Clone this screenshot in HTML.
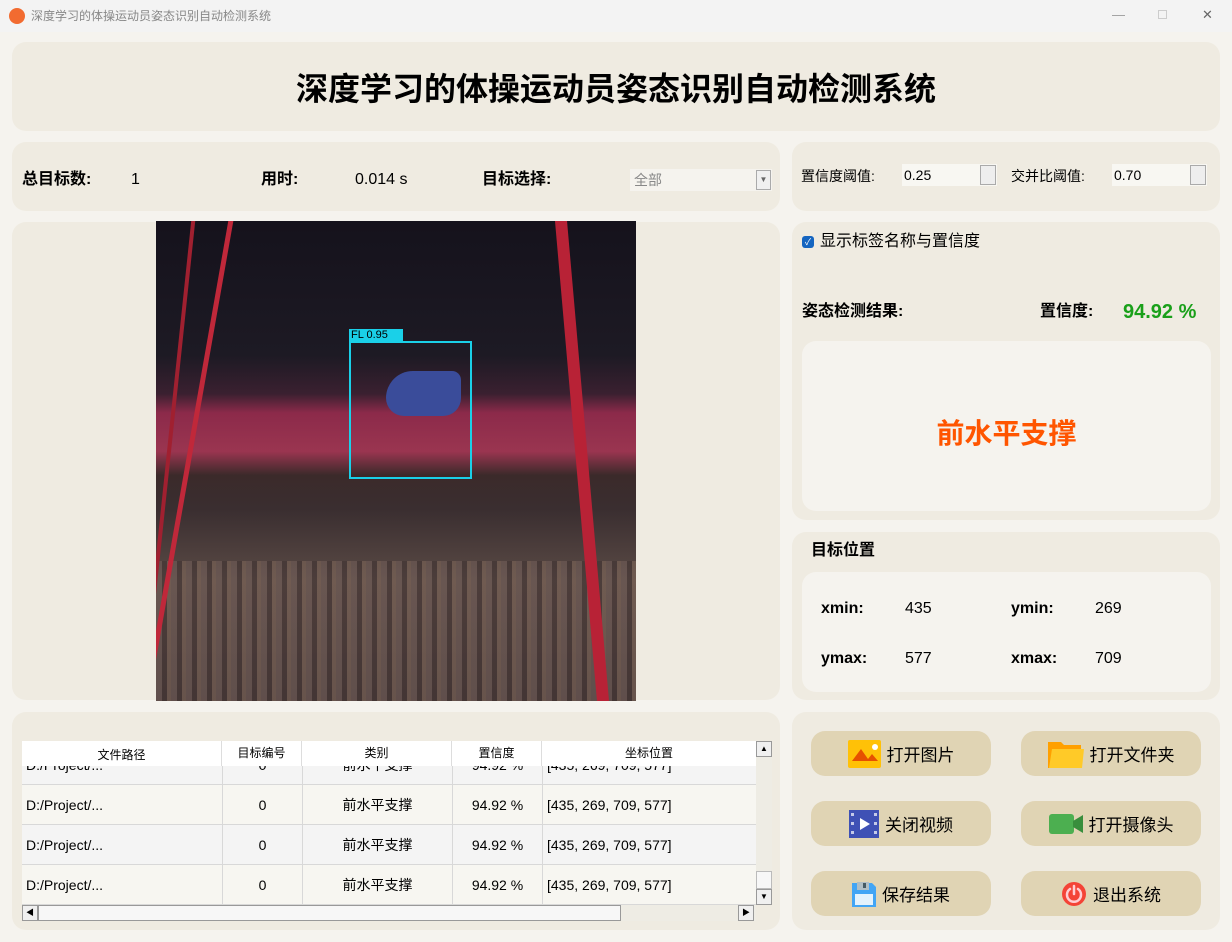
<!DOCTYPE html><html><head><meta charset="utf-8"><style>
*{box-sizing:border-box;margin:0;padding:0}
body{width:1232px;height:942px;background:#f5f3ee;font-family:"Liberation Sans","Noto Sans CJK SC",sans-serif;position:relative;overflow:hidden;color:#000}
.a{position:absolute;line-height:20px}
.p{position:absolute;background:#efebe1;border-radius:14px}
.b{font-weight:bold}
.btn{position:absolute;width:180px;height:45px;background:#e0d4b4;border-radius:14px;font-size:17px;display:flex;align-items:center;justify-content:center;gap:6px}
table{border-collapse:collapse;font-size:14px}
td{border:1px solid #d8d8d8;text-align:center;height:40px}
</style></head><body>
<div class="a" style="left:0;top:0;width:1232px;height:32px;background:#f3f3f3"></div>
<div class="a" style="left:9px;top:8px;width:16px;height:16px;border-radius:50%;background:#f26b30"></div>
<div class="a" style="left:31px;top:6px;font-size:12px;color:#888">深度学习的体操运动员姿态识别自动检测系统</div>
<div class="a" style="left:1112px;top:5px;font-size:13px;color:#999">—</div>
<div class="a" style="left:1158px;top:10px;width:9px;height:9px;border:1px solid #ccc"></div>
<div class="a" style="left:1202px;top:5px;font-size:13px;color:#666">✕</div>

<div class="p" style="left:12px;top:42px;width:1208px;height:89px"></div>
<div class="a b" style="left:0;width:1232px;top:70px;line-height:38px;text-align:center;font-size:32px">深度学习的体操运动员姿态识别自动检测系统</div>

<div class="p" style="left:12px;top:142px;width:768px;height:69px"></div>
<div class="a b" style="left:22px;top:170px;font-size:16px">总目标数:</div>
<div class="a" style="left:131px;top:170px;font-size:16px">1</div>
<div class="a b" style="left:261px;top:170px;font-size:16px">用时:</div>
<div class="a" style="left:355px;top:170px;font-size:16px">0.014 s</div>
<div class="a b" style="left:482px;top:170px;font-size:16px">目标选择:</div>
<div class="a" style="left:630px;top:169px;width:142px;height:22px;background:#f5f3ee;font-size:14px;color:#888;padding:1px 4px">全部</div>
<div class="a" style="left:756px;top:170px;width:15px;height:20px;border:1px solid #aaa;background:#f0f0f0;font-size:8px;color:#666;text-align:center;line-height:18px">▼</div>

<div class="p" style="left:792px;top:142px;width:428px;height:69px"></div>
<div class="a" style="left:801px;top:166px;font-size:14px">置信度阈值:</div>
<div class="a" style="left:902px;top:164px;width:95px;height:22px;background:#f8f7f2;font-size:14px;padding:1px 2px">0.25</div>
<div class="a" style="left:980px;top:165px;width:16px;height:20px;border:1px solid #aaa;background:#eee"></div>
<div class="a" style="left:1011px;top:166px;font-size:14px">交并比阈值:</div>
<div class="a" style="left:1112px;top:164px;width:95px;height:22px;background:#f8f7f2;font-size:14px;padding:1px 2px">0.70</div>
<div class="a" style="left:1190px;top:165px;width:16px;height:20px;border:1px solid #aaa;background:#eee"></div>

<div class="p" style="left:12px;top:222px;width:768px;height:478px"></div>
<div class="a" style="left:156px;top:221px;width:480px;height:480px;overflow:hidden;background:linear-gradient(#15121c 0%,#1d1a24 28%,#3a2030 36%,#8c2a4a 40%,#9a3550 48%,#3b2a2a 53%,#3a2e30 60%,#5a4a45 75%,#4a3c3a 100%)">
<div class="a" style="left:0;top:340px;width:480px;height:140px;background:repeating-linear-gradient(90deg,#7a6560 0 6px,#3c2e2e 6px 11px,#8a7060 11px 15px);opacity:.45"></div>
<div class="a" style="left:30px;top:-20px;width:5px;height:520px;background:#c0283a;transform:rotate(10deg)"></div>
<div class="a" style="left:10px;top:-20px;width:4px;height:520px;background:#a02030;transform:rotate(6deg)"></div>
<div class="a" style="left:420px;top:-20px;width:12px;height:520px;background:#b82236;transform:rotate(-5deg)"></div>
<div class="a" style="left:193px;top:120px;width:123px;height:138px;border:2px solid #1ad0e8"></div>
<div class="a" style="left:193px;top:108px;width:54px;height:13px;background:#1ad0e8;font-size:11px;line-height:13px;padding-left:2px">FL 0.95</div>
<div class="a" style="left:230px;top:150px;width:75px;height:45px;background:#3a4c9a;border-radius:30px 10px 20px 20px"></div>
</div>

<div class="p" style="left:792px;top:222px;width:428px;height:298px"></div>
<div class="a" style="left:802px;top:236px;width:12px;height:12px;background:#1565c0;border-radius:3px;color:#fff;font-size:9px;text-align:center;line-height:12px">✓</div>
<div class="a" style="left:820px;top:232px;font-size:16px">显示标签名称与置信度</div>
<div class="a b" style="left:802px;top:302px;font-size:16px">姿态检测结果:</div>
<div class="a b" style="left:1040px;top:302px;font-size:16px">置信度:</div>
<div class="a b" style="left:1123px;top:302px;font-size:20px;color:#1aa01a">94.92 %</div>
<div class="a" style="left:802px;top:341px;width:409px;height:170px;background:#f5f3ee;border-radius:14px"></div>
<div class="a b" style="left:802px;width:409px;top:418px;line-height:32px;text-align:center;font-size:28px;color:#ff5500">前水平支撑</div>

<div class="p" style="left:792px;top:532px;width:428px;height:168px"></div>
<div class="a b" style="left:811px;top:541px;font-size:16px">目标位置</div>
<div class="a" style="left:802px;top:572px;width:409px;height:120px;background:#f5f3ee;border-radius:14px"></div>
<div class="a b" style="left:821px;top:599px;font-size:16px">xmin:</div><div class="a" style="left:905px;top:599px;font-size:16px">435</div>
<div class="a b" style="left:1011px;top:599px;font-size:16px">ymin:</div><div class="a" style="left:1095px;top:599px;font-size:16px">269</div>
<div class="a b" style="left:821px;top:649px;font-size:16px">ymax:</div><div class="a" style="left:905px;top:649px;font-size:16px">577</div>
<div class="a b" style="left:1011px;top:649px;font-size:16px">xmax:</div><div class="a" style="left:1095px;top:649px;font-size:16px">709</div>

<div class="p" style="left:12px;top:712px;width:768px;height:218px"></div>
<div class="a" style="left:22px;top:741px;width:734px;height:164px;overflow:hidden;background:#f7f6f1">
<table class="a" style="left:-1px;top:3px;width:736px">
<colgroup><col style="width:201px"><col style="width:80px"><col style="width:150px"><col style="width:90px"><col></colgroup>
<tr style="background:#f4f4f4"><td style="text-align:left;padding-left:4px">D:/Project/...</td><td>0</td><td>前水平支撑</td><td>94.92 %</td><td style="text-align:left;padding-left:4px">[435, 269, 709, 577]</td></tr>
<tr><td style="text-align:left;padding-left:4px">D:/Project/...</td><td>0</td><td>前水平支撑</td><td>94.92 %</td><td style="text-align:left;padding-left:4px">[435, 269, 709, 577]</td></tr>
<tr style="background:#f4f4f4"><td style="text-align:left;padding-left:4px">D:/Project/...</td><td>0</td><td>前水平支撑</td><td>94.92 %</td><td style="text-align:left;padding-left:4px">[435, 269, 709, 577]</td></tr>
<tr><td style="text-align:left;padding-left:4px">D:/Project/...</td><td>0</td><td>前水平支撑</td><td>94.92 %</td><td style="text-align:left;padding-left:4px">[435, 269, 709, 577]</td></tr>
</table>
<div class="a" style="left:0;top:0;width:734px;height:25px;background:#fff;font-size:12px;display:flex;line-height:16px">
<div style="width:200px;text-align:center;padding-top:6px;border-right:1px solid #ddd">文件路径</div><div style="width:80px;text-align:center;padding-top:4px;border-right:1px solid #ddd">目标编号</div><div style="width:150px;text-align:center;padding-top:4px;border-right:1px solid #ddd">类别</div><div style="width:90px;text-align:center;padding-top:4px;border-right:1px solid #ddd">置信度</div><div style="flex:1;text-align:center;padding-top:4px">坐标位置</div></div>
</div>
<div class="a" style="left:756px;top:741px;width:16px;height:164px;background:#eeece4"></div>
<div class="a" style="left:756px;top:741px;width:16px;height:16px;border:1px solid #999;background:#f0f0f0;font-size:8px;text-align:center;line-height:14px">▲</div>
<div class="a" style="left:756px;top:871px;width:16px;height:18px;border:1px solid #bbb;background:#f7f7f7"></div>
<div class="a" style="left:756px;top:889px;width:16px;height:16px;border:1px solid #999;background:#f0f0f0;font-size:8px;text-align:center;line-height:14px">▼</div>
<div class="a" style="left:22px;top:905px;width:734px;height:16px;background:#eeece4"></div>
<div class="a" style="left:22px;top:905px;width:16px;height:16px;border:1px solid #999;background:#f0f0f0;font-size:8px;text-align:center;line-height:14px">◀</div>
<div class="a" style="left:38px;top:905px;width:583px;height:16px;border:1px solid #999;background:#f7f7f7"></div>
<div class="a" style="left:738px;top:905px;width:16px;height:16px;border:1px solid #999;background:#f0f0f0;font-size:8px;text-align:center;line-height:14px">▶</div>

<div class="p" style="left:792px;top:712px;width:428px;height:218px"></div>
<div class="btn" style="left:811px;top:731px"><svg width="33" height="28"><rect width="33" height="28" rx="2" fill="#ffc107"/><path d="M4 21L13 9L20 19L24 14L30 21Z" fill="#e65100"/><circle cx="27" cy="7" r="3" fill="#fff"/></svg>打开图片</div>
<div class="btn" style="left:1021px;top:731px"><svg width="36" height="28"><path d="M0 2h13l3 3h17v23H0z" fill="#ffa000"/><path d="M4 9h32l-2 19H1z" fill="#ffca28"/></svg>打开文件夹</div>
<div class="btn" style="left:811px;top:801px"><svg width="30" height="28"><rect width="30" height="28" fill="#3f51b5"/><path d="M11 8l10 6-10 6z" fill="#fff"/><g fill="#c5cae9"><rect x="2" y="3" width="3" height="3"/><rect x="2" y="12" width="3" height="3"/><rect x="2" y="21" width="3" height="3"/><rect x="25" y="3" width="3" height="3"/><rect x="25" y="12" width="3" height="3"/><rect x="25" y="21" width="3" height="3"/></g></svg>关闭视频</div>
<div class="btn" style="left:1021px;top:801px"><svg width="34" height="20"><rect width="25" height="20" rx="3" fill="#4caf50"/><path d="M24 7l10-6v18l-10-6z" fill="#388e3c"/></svg>打开摄像头</div>
<div class="btn" style="left:811px;top:871px"><svg width="24" height="26"><path d="M0 2h20l4 4v20H0z" fill="#42a5f5"/><rect x="5" y="1" width="12" height="8" fill="#b0bec5"/><rect x="11" y="2" width="3" height="5" fill="#455a64"/><rect x="3" y="13" width="18" height="11" fill="#e3f2fd"/></svg>保存结果</div>
<div class="btn" style="left:1021px;top:871px"><svg width="26" height="26"><circle cx="13" cy="13" r="12" fill="#f44336"/><path d="M9 8a7 7 0 1 0 8 0M13 5v8" stroke="#ffcdd2" stroke-width="2.5" fill="none" stroke-linecap="round"/></svg>退出系统</div>
</body></html>
